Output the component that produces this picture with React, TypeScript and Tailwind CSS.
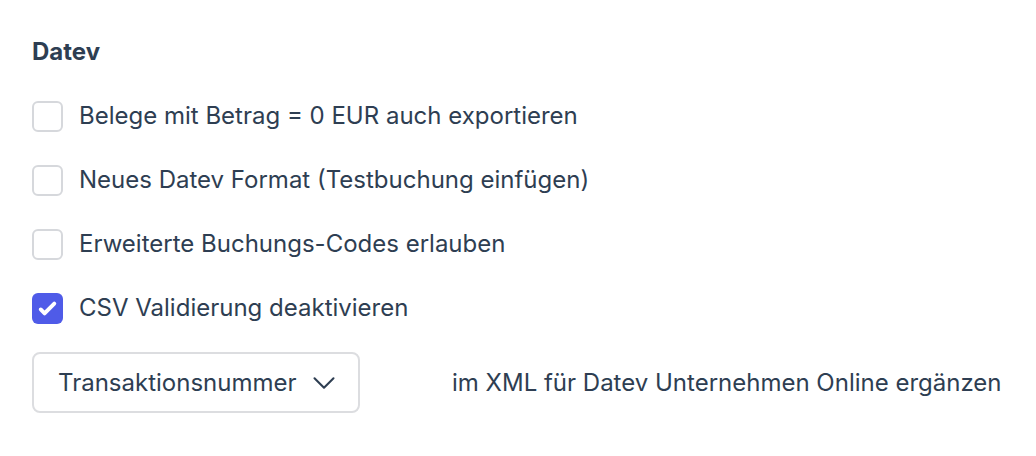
import { ChevronDown } from "lucide-react";

const options = [
  { label: "Belege mit Betrag = 0 EUR auch exportieren", checked: false },
  { label: "Neues Datev Format (Testbuchung einfügen)", checked: false },
  { label: "Erweiterte Buchungs-Codes erlauben", checked: false },
  { label: "CSV Validierung deaktivieren", checked: true },
];

export default function App() {
  return (
    <div className="w-[1036px] h-[456px] bg-white px-8 pt-[36px] text-[#2e3e52] font-['Inter',sans-serif]">
      <h2 className="text-[24px] font-bold leading-8">Datev</h2>

      <div className="mt-[32px] flex flex-col gap-[32px]">
        {options.map((o) => (
          <label key={o.label} className="flex items-center gap-4 h-8">
            {o.checked ? (
              <span className="w-[31px] h-[31px] rounded-md bg-[#4f5be8]">
                {/* forms-style check glyph */}
                <svg viewBox="0 0 16 16" fill="white" className="w-full h-full">
                  <path d="M12.207 4.793a1 1 0 010 1.414l-5 5a1 1 0 01-1.414 0l-2-2a1 1 0 011.414-1.414L6.5 9.086l4.293-4.293a1 1 0 011.414 0z" />
                </svg>
              </span>
            ) : (
              <span className="w-[31px] h-[31px] rounded-md border-2 border-[#d6d8dc] bg-white" />
            )}
            <span className="text-[24px] leading-8">{o.label}</span>
          </label>
        ))}
      </div>

      <div className="mt-[28px] flex items-center">
        <button className="w-[328px] h-[61px] rounded-lg border-2 border-[#dcdde0] flex items-center justify-between pl-[24px] pr-[15px] text-[24px]">
          <span>Transaktionsnummer</span>
          <ChevronDown className="w-[38px] h-[38px]" strokeWidth={1.3} />
        </button>
        <span className="ml-[92px] text-[24px]">im XML für Datev Unternehmen Online ergänzen</span>
      </div>
    </div>
  );
}
